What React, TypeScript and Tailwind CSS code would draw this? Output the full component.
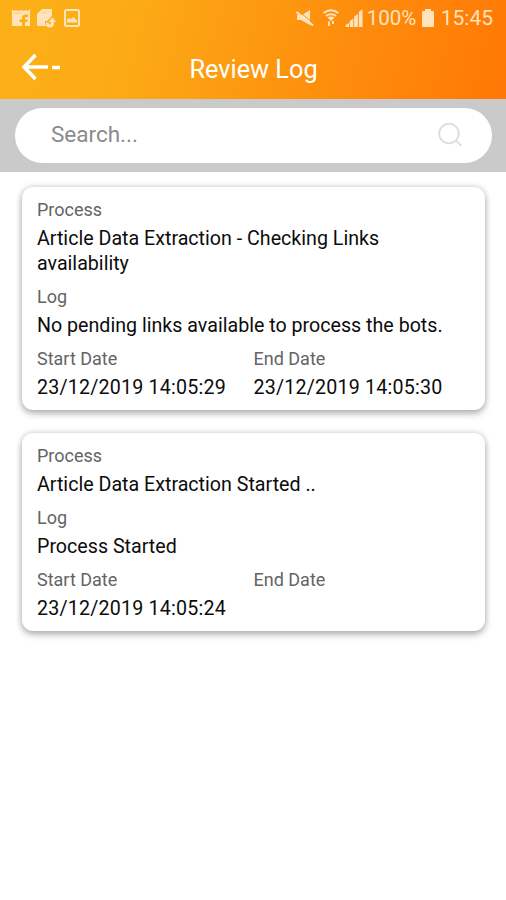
import React from 'react';

interface LogEntry {
  process: string;
  log: string;
  start: string;
  end: string;
}

const entries: LogEntry[] = [
  {
    process: 'Article Data Extraction - Checking Links availability',
    log: 'No pending links available to process the bots.',
    start: '23/12/2019 14:05:29',
    end: '23/12/2019 14:05:30',
  },
  {
    process: 'Article Data Extraction Started ..',
    log: 'Process Started',
    start: '23/12/2019 14:05:24',
    end: '',
  },
];

function StatusBar() {
  return (
    <div className="flex h-9 items-center justify-between pl-3 pr-[13px] text-[#ffe3bb]">
      <div className="flex items-center gap-[7px]">
        {/* News briefing */}
        <svg className="h-[18px] w-[18px]" viewBox="0 0 18 18" fill="currentColor">
          <path d="M0 0l2 2 2-1 2 1 3-1 3 1 2-1 2 1 2-2v17h-5v-4h2.500v-2.500H13V9q0-1 1-1h2V5.500h-2.500Q10 5.500 10 9v1.500H7.500V13H10v4H0z" />
          <path d="M2 4.200h8" stroke="#fccb80" fill="none" />
        </svg>
        {/* Card with transfer arrow */}
        <svg className="h-[19px] w-[19px]" viewBox="0 0 19 19" fill="currentColor">
          <path d="M5 0h9q1 0 1 1v6l-5 5H8v3l1.500 2H1q-1 0-1-1V5z" />
          <path d="M6 2.500v2M8.500 2.500v2M11 2.500v2" stroke="#fccb80" fill="none" />
          <path d="M9 13.500h2.500q0 2 1.200 2t1.300-2V13h-2.500l4-4.500 3.500 4.500h-2v1q0 4.500-4.300 4.500T9 13.500z" />
        </svg>
        <svg className="ml-px h-[18px] w-4" viewBox="0 0 16 18" fill="none" stroke="currentColor" strokeWidth="2">
          <rect x="1" y="1" width="14" height="16" rx="1.500" />
          <path d="M3 13.500v-3l2-1.500 2 1 2.500-2 3.500 3.500v2z" fill="currentColor" stroke="none" />
        </svg>
      </div>

      <div className="flex items-center">
        <svg className="mr-[9px] h-[17px] w-[18px]" viewBox="0 0 18 17" fill="currentColor">
          <path d="M1 5h5l8-5v15L5 10H1z" />
          <path d="M0.500 2L17 15.500" stroke="#ffe3bb" strokeWidth="2.200" />
          <path d="M3 1.500L18 13.500" stroke="#fd9912" strokeWidth="1" />
        </svg>
        <svg className="mr-[6px] h-[18px] w-4" viewBox="0 0 16 18" fill="none" stroke="currentColor" strokeWidth="2">
          <path d="M0.500 4Q8-1.500 15.500 4M3 6.800Q8 3.500 13 6.800" />
          <path d="M4.500 8.500Q8 6.500 11.500 8.500L8 12z" fill="currentColor" stroke="none" />
          <path d="M6 12.500v4.500M10 12v3" strokeWidth="2" />
        </svg>
        <svg className="mr-1 h-[18px] w-[18px]" viewBox="0 0 17 18" fill="currentColor">
          <path d="M0 16l3.500-2v4H0zM4.200 12l3.700-2.500V18H4.200zM8.700 7.500L12.400 5v13H8.700zM13.300 3L17 0v18h-3.700z" />
        </svg>
        <span className="w-[53px] whitespace-nowrap text-[20.500px] leading-6">100%</span>
        <svg className="mr-[7px] ml-0.5 h-[18px] w-3" viewBox="0 0 12 18" fill="currentColor">
          <path d="M3 0h6v2h2q1 0 1 1v14q0 1-1 1H1q-1 0-1-1V3q0-1 1-1h2z" />
        </svg>
        <span className="whitespace-nowrap text-[21px] leading-6">15:45</span>
      </div>
    </div>
  );
}

function Header() {
  return (
    <header className="h-[98.500px] bg-linear-[105deg,#fcb017_0%,#fcab16_25%,#fe8c0c_68%,#ff7805_100%]">
      <StatusBar />
      <div className="grid h-[62px] grid-cols-[80px_1fr_80px] items-center">
        <button className="pl-[22px] text-white" aria-label="Back">
          <svg className="h-7 w-10" viewBox="0 0 40 28" fill="none" stroke="currentColor" strokeWidth="3.600">
            <path d="M13.500 2L2 14l11.500 12M2 14h24M30 14.500h8" />
          </svg>
        </button>
        <h1 className="pl-px pt-1.5 text-center text-[25.300px] leading-8 text-white">Review Log</h1>
      </div>
    </header>
  );
}

function SearchBar() {
  return (
    <div className="h-[73.500px] bg-[#cacaca] pl-[15px] pr-3.5 pt-[9.500px]">
      <div className="flex h-[55px] items-center justify-between rounded-full bg-white pb-0.5 pl-9 pr-[30px]">
        <span className="text-[22.500px] text-[#8b8b8b]">Search...</span>
        <svg className="h-6 w-6" viewBox="0 0 24 24" fill="none" stroke="#dcdcdc" strokeWidth="1.800">
          <circle cx="11" cy="10.500" r="9.800" />
          <path d="M17.800 17.300l5.500 5.500" />
        </svg>
      </div>
    </div>
  );
}

function Field({ label, children }: { label: string; children: React.ReactNode }) {
  return (
    <div>
      <div className="mb-[3.500px] text-[18px] leading-[25px] text-[#646464]">{label}</div>
      <div className="text-[19.650px] leading-[25px] text-[#0c0c0c]">{children}</div>
    </div>
  );
}

function LogCard({ entry }: { entry: LogEntry }) {
  return (
    <div className="flex flex-col gap-[8.500px] rounded-[11px] bg-white px-[15px] pb-[10.500px] pt-[10.500px] shadow-[0_4px_7px_rgba(0,0,0,0.24),0_0_6px_rgba(0,0,0,0.2)]">
      <Field label="Process">{entry.process}</Field>
      <Field label="Log">{entry.log}</Field>
      <div className="grid grid-cols-2">
        <Field label="Start Date">
          <span className="tracking-[0.200px]">{entry.start}</span>
        </Field>
        <Field label="End Date">
          <span className="tracking-[0.200px]">{entry.end}</span>
        </Field>
      </div>
    </div>
  );
}

export default function App() {
  return (
    <div className="h-[900px] w-[506px] overflow-hidden bg-white font-['Roboto',sans-serif]">
      <Header />
      <SearchBar />
      <main className="flex flex-col gap-[22.500px] pl-[22px] pr-[21px] pt-[14.500px]">
        {entries.map((entry) => (
          <LogCard key={entry.start} entry={entry} />
        ))}
      </main>
    </div>
  );
}
